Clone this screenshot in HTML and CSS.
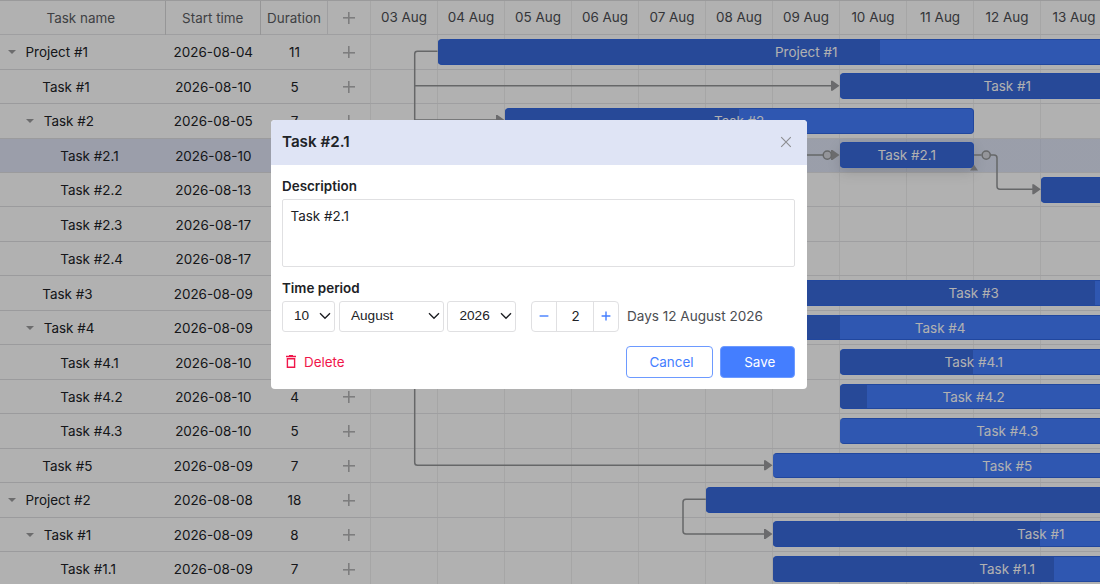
FILE: index.html
```html
<!DOCTYPE html>
<html lang="en">
<head>
<meta charset="utf-8">
<title>Gantt chart</title>
<link rel="stylesheet" href="styles.css">
</head>
<body>
<main class="gantt">
  <section class="grid">
    <div class="grid-head"><div class="col-name">Task name</div><div class="col-start">Start time</div><div class="col-dur">Duration</div><div class="col-add"><i class="plus"></i></div></div>
    <div class="row"><div class="name l0"><i class="caret"></i>Project #1</div><div class="start">2026-08-04</div><div class="dur">11</div><div class="add"><i class="plus"></i></div></div>
    <div class="row"><div class="name l1">Task #1</div><div class="start">2026-08-10</div><div class="dur">5</div><div class="add"><i class="plus"></i></div></div>
    <div class="row"><div class="name l1"><i class="caret"></i>Task #2</div><div class="start">2026-08-05</div><div class="dur">7</div><div class="add"><i class="plus"></i></div></div>
    <div class="row selected"><div class="name l2">Task #2.1</div><div class="start">2026-08-10</div><div class="dur">2</div><div class="add"><i class="plus"></i></div></div>
    <div class="row"><div class="name l2">Task #2.2</div><div class="start">2026-08-13</div><div class="dur">4</div><div class="add"><i class="plus"></i></div></div>
    <div class="row"><div class="name l2">Task #2.3</div><div class="start">2026-08-17</div><div class="dur">1</div><div class="add"><i class="plus"></i></div></div>
    <div class="row"><div class="name l2">Task #2.4</div><div class="start">2026-08-17</div><div class="dur">4</div><div class="add"><i class="plus"></i></div></div>
    <div class="row"><div class="name l1">Task #3</div><div class="start">2026-08-09</div><div class="dur">6</div><div class="add"><i class="plus"></i></div></div>
    <div class="row"><div class="name l1"><i class="caret"></i>Task #4</div><div class="start">2026-08-09</div><div class="dur">5</div><div class="add"><i class="plus"></i></div></div>
    <div class="row"><div class="name l2">Task #4.1</div><div class="start">2026-08-10</div><div class="dur">4</div><div class="add"><i class="plus"></i></div></div>
    <div class="row"><div class="name l2">Task #4.2</div><div class="start">2026-08-10</div><div class="dur">4</div><div class="add"><i class="plus"></i></div></div>
    <div class="row"><div class="name l2">Task #4.3</div><div class="start">2026-08-10</div><div class="dur">5</div><div class="add"><i class="plus"></i></div></div>
    <div class="row"><div class="name l1">Task #5</div><div class="start">2026-08-09</div><div class="dur">7</div><div class="add"><i class="plus"></i></div></div>
    <div class="row"><div class="name l0"><i class="caret"></i>Project #2</div><div class="start">2026-08-08</div><div class="dur">18</div><div class="add"><i class="plus"></i></div></div>
    <div class="row"><div class="name l1"><i class="caret"></i>Task #1</div><div class="start">2026-08-09</div><div class="dur">8</div><div class="add"><i class="plus"></i></div></div>
    <div class="row"><div class="name l2">Task #1.1</div><div class="start">2026-08-09</div><div class="dur">7</div><div class="add"><i class="plus"></i></div></div>
  </section>

  <section class="timeline">
    <div class="scale"><div>03 Aug</div><div>04 Aug</div><div>05 Aug</div><div>06 Aug</div><div>07 Aug</div><div>08 Aug</div><div>09 Aug</div><div>10 Aug</div><div>11 Aug</div><div>12 Aug</div><div>13 Aug</div></div>
    <div class="lane"><div class="bar" style="--from:1;--days:11;--done:60%"><span>Project #1</span></div></div>
    <div class="lane"><div class="bar" style="--from:7;--days:5;--done:100%"><span>Task #1</span></div></div>
    <div class="lane"><div class="bar" style="--from:2;--days:7;--done:50%"><span>Task #2</span></div></div>
    <div class="lane selected"><div class="bar raised" style="--from:7;--days:2;--done:100%"><span>Task #2.1</span></div></div>
    <div class="lane"><div class="bar" style="--from:10;--days:4;--done:80%"></div></div>
    <div class="lane"></div>
    <div class="lane"></div>
    <div class="lane"><div class="bar" style="--from:6;--days:6;--done:80.3%"><span>Task #3</span></div></div>
    <div class="lane"><div class="bar" style="--from:6;--days:5;--done:20%"><span>Task #4</span></div></div>
    <div class="lane"><div class="bar" style="--from:7;--days:4;--done:50%"><span>Task #4.1</span></div></div>
    <div class="lane"><div class="bar" style="--from:7;--days:4;--done:10%"><span>Task #4.2</span></div></div>
    <div class="lane"><div class="bar" style="--from:7;--days:5;--done:0%"><span>Task #4.3</span></div></div>
    <div class="lane"><div class="bar" style="--from:6;--days:7;--done:0%"><span>Task #5</span></div></div>
    <div class="lane"><div class="bar" style="--from:5;--days:18;--done:60%"></div></div>
    <div class="lane"><div class="bar" style="--from:6;--days:8;--done:50%"><span>Task #1</span></div></div>
    <div class="lane"><div class="bar" style="--from:6;--days:7;--done:60%"><span>Task #1.1</span></div></div>
  </section>

  <svg class="links" width="1100" height="584" viewBox="0 0 1100 584">
    <g class="wire">
      <path d="M437.5 51.3H417.5Q414.7 51.3 414.7 54V462.5Q414.7 465.3 417.5 465.3H765"/>
      <path d="M414.7 85.7H832M414.7 120H497"/>
      <path d="M800 154.9H823M974 154.9H981.6M990.6 154.9H994Q997 154.9 997 157.9V186.3Q997 189.3 1000 189.3H1033"/>
      <path d="M705.8 499.3H686Q683 499.3 683 502.3V531Q683 534 686 534H765"/>
    </g>
    <g class="head">
      <path d="M831 80.7h1.5l7 5-7 5H831zM496 115h1.5l7 5-7 5H496zM831 149.9h1.5l7 5-7 5H831zM1032.3 184.3h1.5l7 5-7 5h-1.5zM764 460.3h1.5l7 5-7 5H764zM764 529h1.5l7 5-7 5H764z"/>
      <path d="M974 164.7l4 5.8h-8z"/>
    </g>
    <g class="knob"><circle cx="827.3" cy="155.1" r="4.1"/><circle cx="986.2" cy="155.1" r="4.1"/></g>
  </svg>
</main>

<div class="cover">
  <form class="dialog">
    <header class="dialog-head">
      <span>Task #2.1</span>
      <svg class="close" width="12" height="12" viewBox="0 0 12 12"><path d="M1.2 1.2l9.6 9.6M10.8 1.2L1.2 10.8"/></svg>
    </header>
    <div class="dialog-body">
      <div class="label">Description</div>
      <div class="textarea">Task #2.1</div>
      <div class="label label-time">Time period</div>
      <div class="period">
        <div class="select day">10<svg width="12" height="8" viewBox="0 0 12 8"><path d="M1 1.2l5 5 5-5"/></svg></div>
        <div class="select month">August<svg width="12" height="8" viewBox="0 0 12 8"><path d="M1 1.2l5 5 5-5"/></svg></div>
        <div class="select year">2026<svg width="12" height="8" viewBox="0 0 12 8"><path d="M1 1.2l5 5 5-5"/></svg></div>
        <div class="stepper"><div class="step"><svg width="10" height="10" viewBox="0 0 10 10"><path d="M.6 5h8.8"/></svg></div><div class="value">2</div><div class="step"><svg width="10" height="10" viewBox="0 0 10 10"><path d="M.6 5h8.8M5 .6v8.8"/></svg></div></div>
        <div class="until">Days 12 August 2026</div>
      </div>
      <footer class="actions">
        <div class="delete"><svg width="10" height="13" viewBox="0 0 10 13"><path d="M0 1.5h10M3 .6h4M1.4 3.7v8.6h7.2V3.7z"/></svg>Delete</div>
        <div class="btn cancel">Cancel</div>
        <div class="btn save">Save</div>
      </footer>
    </div>
  </form>
</div>
</body>
</html>
```
FILE: styles.css
```css
* { box-sizing: border-box; }
body {
  --row: 34.47px;
  --day: 67px;
  --line: #e6e6e8;
  --blue: #447eff;
  margin: 0;
  width: 1100px;
  height: 584px;
  overflow: hidden;
  font: 13.45px/20px Inter, "Liberation Sans", sans-serif;
  color: #202226;
  background: #fff;
}
.gantt {
  position: relative;
  display: flex;
  width: 1100px;
  height: 584px;
  overflow: hidden;
}
.grid { flex: 0 0 371px; border-right: 1px solid var(--line); }
.grid-head, .row { display: grid; grid-template-columns: 165.6px 95.4px 67px 41.4px; align-items: center; }
.grid-head, .scale {
  height: 35.1px;
  padding-bottom: 1px;
  border-top: 1px solid #dedee0;
  border-bottom: 1px solid var(--line);
  color: #5b5d62;
}
.grid-head > div {
  height: 34px;
  display: flex;
  align-items: center;
  justify-content: center;
  border-right: 1px solid #d8d8da;
}
.grid-head .col-name { padding-right: 3px; }
.grid-head .col-dur { border-color: var(--line); }
.grid-head .col-add { border: 0; }
.row { height: var(--row); padding-top: 1px; border-bottom: 1px solid #e0e0e2; }
.selected { background: #dfe4f5; }
.name { display: flex; align-items: center; }
.l0 { padding-left: 8px; }
.l1 { padding-left: 42.3px; }
.l2 { padding-left: 60.3px; }
.l1:has(.caret) { padding-left: 26.3px; }
.start, .dur { text-align: center; }
.add { display: flex; justify-content: center; }
.caret {
  flex: none;
  margin: 0 9.5px 0 0;
  border: 4.3px solid transparent;
  border-top: 4.6px solid #9c9c9e;
  border-bottom: 0;
}
.plus {
  width: 12px;
  height: 12px;
  background:
    linear-gradient(#b4b5b6, #b4b5b6) center / 12px 1.6px no-repeat,
    linear-gradient(#b4b5b6, #b4b5b6) center / 1.6px 12px no-repeat;
}
.timeline {
  flex: none;
  width: 737px;
  margin-left: -1px;
  background: repeating-linear-gradient(to right, #efefef 0 1px, transparent 1px 67px);
}
.scale { display: flex; }
.scale > div {
  flex: 0 0 var(--day);
  display: flex;
  align-items: center;
  justify-content: center;
  padding-left: 1px;
  color: #4b4d52;
}
.lane { height: var(--row); border-bottom: 1px solid var(--line); padding-top: 3.8px; }
.lane.selected { background: linear-gradient(rgba(190, 202, 235, .5), rgba(190, 202, 235, .5)); }
.bar {
  width: calc(var(--days) * var(--day));
  height: 25.8px;
  margin-left: calc(var(--from) * var(--day) + .7px);
  border: 1px solid #3067e4;
  border-left-width: 0;
  border-radius: 4px;
  background: linear-gradient(to right, #3969db var(--done), transparent var(--done)) var(--blue);
  color: #fff;
  text-align: center;
  line-height: 24px;
  padding-left: 1px;
}
.raised { box-shadow: 0 5px 14px rgba(0, 0, 0, .12); }
.links { position: absolute; inset: 0; }
.wire { fill: none; stroke: #939597; stroke-width: 1.5; }
.head { fill: #9a9b9d; }
.knob { fill: #d5d7de; stroke: #939597; stroke-width: 1.5; }
.cover {
  position: absolute;
  inset: 0;
  padding: 120px 0 0 270.7px;
  background: rgba(0, 0, 0, .305);
}
.dialog {
  width: 536.3px;
  height: 268.7px;
  border-radius: 4px;
  overflow: hidden;
  background: #fff;
}
.dialog-head {
  display: flex;
  justify-content: space-between;
  align-items: center;
  height: 45px;
  padding: 0 15px 1px 11.3px;
  background: #dfe4f5;
  font-size: 15.2px;
  font-weight: 600;
}
.dialog svg { flex: none; fill: none; stroke: currentColor; stroke-width: 1.4; }
.dialog .close { stroke: #8c8d90; stroke-width: 1.1; }
.dialog-body { padding: 11px 12px 0 11.3px; }
.label { font-weight: 600; }
.label-time { margin-top: 11px; }
.textarea {
  height: 68px;
  margin-top: 3px;
  padding: 6px 7.5px;
  border: 1px solid #e0e0e2;
  border-radius: 2px;
}
.period { display: flex; height: 31px; margin-top: 3px; gap: 3.5px; }
.select {
  display: flex;
  align-items: center;
  justify-content: space-between;
  padding: 0 3px 1px 11px;
  border: 1px solid #e0e0e2;
  border-radius: 3px;
  font-family: "Liberation Sans", Arial, sans-serif;
  font-size: 13.6px;
}
.day { width: 53.5px; }
.month { width: 105px; }
.year { width: 69px; }
.stepper { display: flex; width: 88px; margin-left: 11.5px; border: 1px solid #e0e0e2; border-radius: 4px; }
.stepper > div { display: flex; align-items: center; justify-content: center; padding-bottom: 1px; }
.step { flex: 0 0 24px; color: var(--blue); }
.value { flex: 1; border: solid #e0e0e2; border-width: 0 1px; }
.until { align-self: center; margin: 0 0 1px 4px; color: #4b4d52; font-size: 13.55px; }
.actions { display: flex; align-items: center; height: 31.5px; margin-top: 14.2px; }
.delete { display: flex; align-items: center; gap: 8px; margin: 0 auto 0 4px; color: #f0164a; }
.btn {
  display: flex;
  align-items: center;
  justify-content: center;
  height: 100%;
  padding-left: 4px;
  border: 1px solid #6d9aff;
  border-radius: 4px;
}
.cancel { width: 87px; color: var(--blue); }
.save { width: 74.5px; margin-left: 7.5px; background: var(--blue); color: #fff; }
```
